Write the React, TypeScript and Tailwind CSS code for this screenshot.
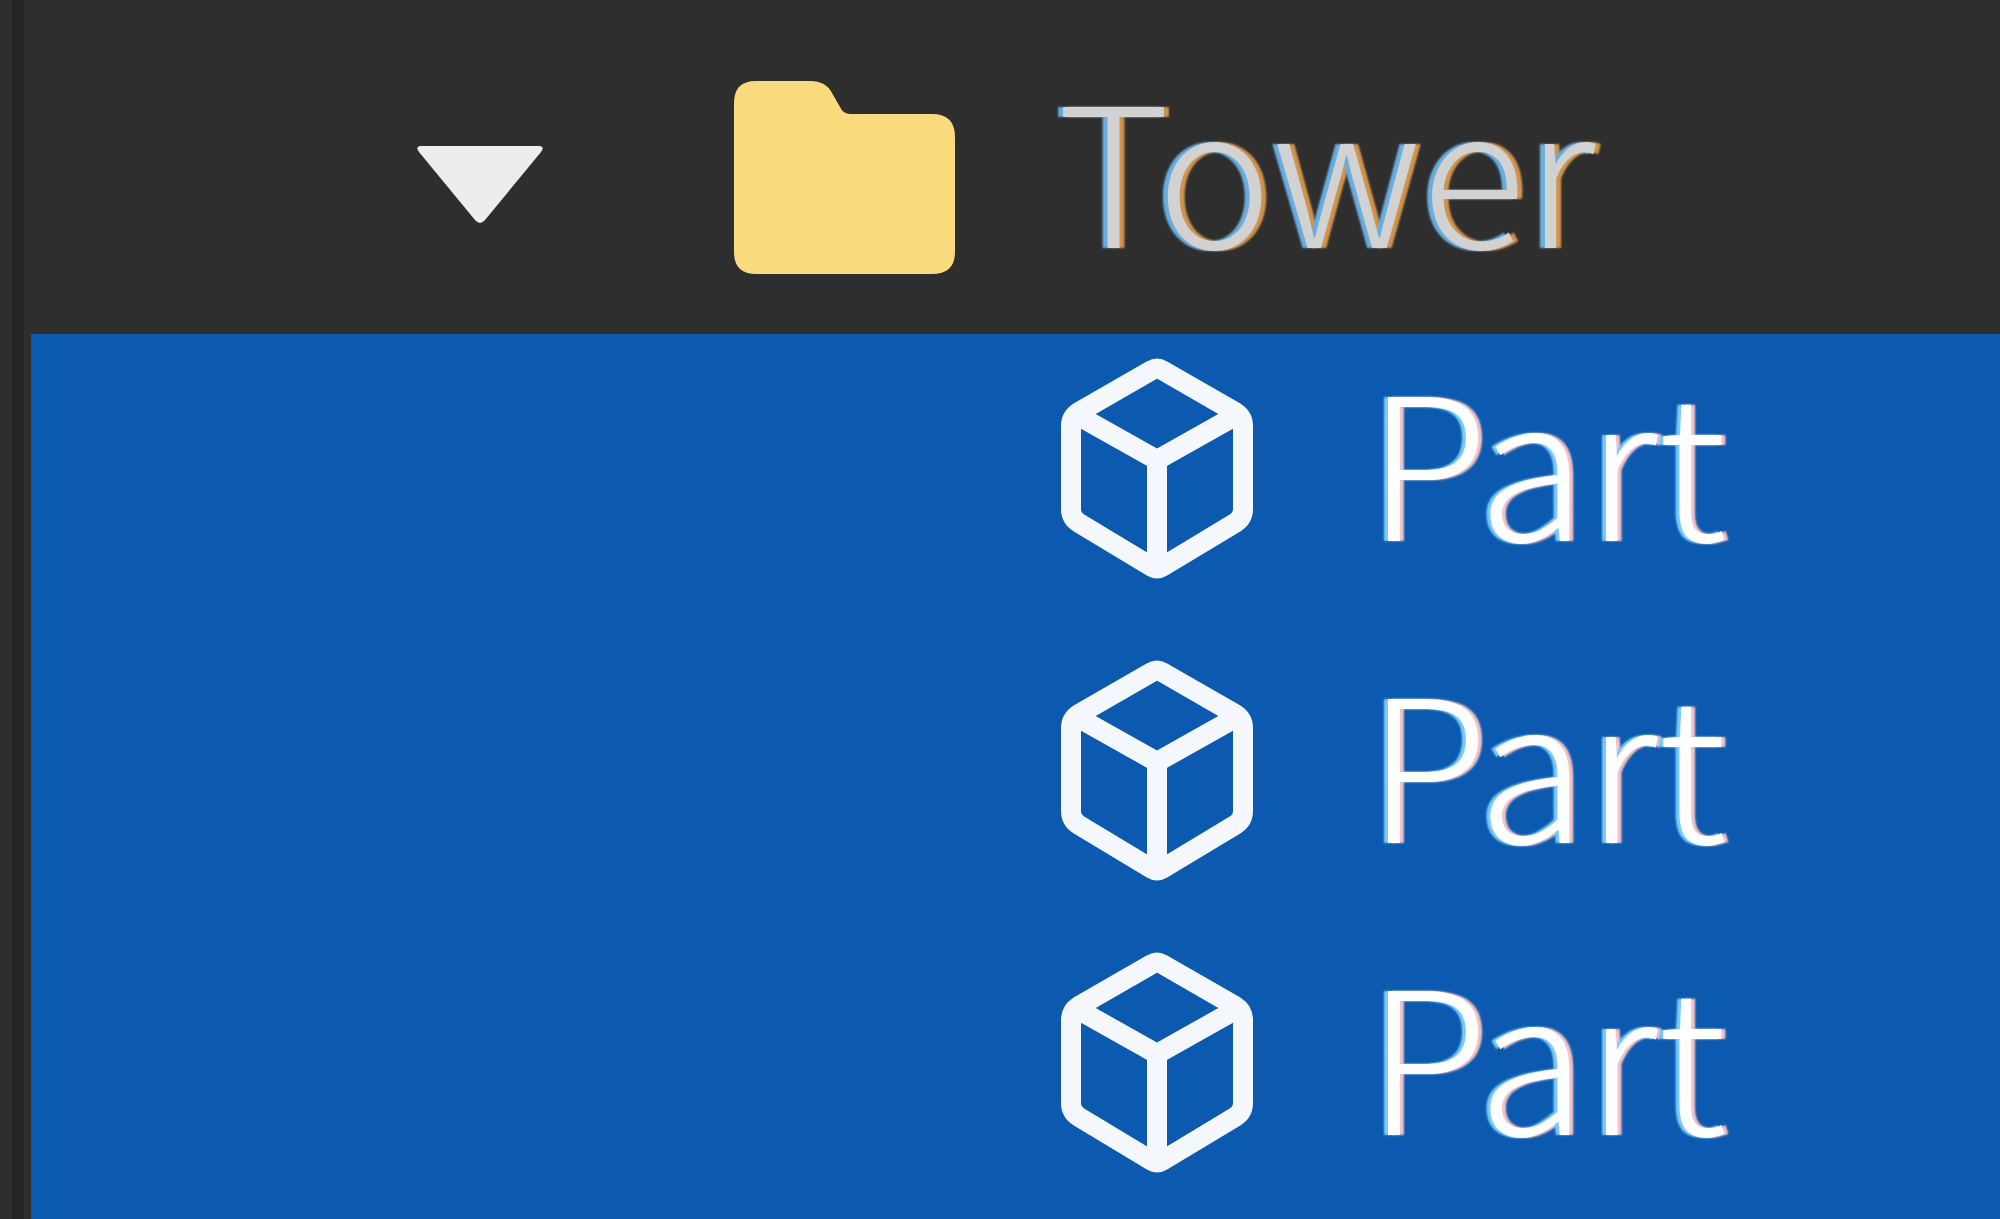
const parts = [
    { id: 1, name: "Part", height: "h-[302px]" },
    { id: 2, name: "Part", height: "h-[292px]" },
    { id: 3, name: "Part", height: "h-[291px]" },
]

function FolderIcon() {
    return (
        <svg viewBox="0 0 226 202" className="h-[202px] w-[226px] shrink-0" aria-hidden="true">
            <path
                d="M24 5H78Q94 5 100 17L108 31Q111 38 118 38H200Q223 38 223 61V176Q223 198 200 198H24Q2 198 2 176V27Q2 5 24 5Z"
                fill="#f9da7d"
            />
        </svg>
    )
}

function CubeIcon() {
    return (
        <svg
            viewBox="0 0 220 236"
            className="h-[236px] w-[220px] shrink-0"
            fill="none"
            stroke="#f4f7fc"
            strokeWidth="20"
            strokeLinejoin="round"
            aria-hidden="true"
        >
            <path d="M105 19Q110 16 115 19L188 61Q196 66 196 75V158Q196 167 188 172L115 216Q110 219 105 216L32 172Q24 167 24 158V75Q24 66 32 61Z" />
            <path d="M30 64L110 109L190 64M110 109V217" />
        </svg>
    )
}

export default function App() {
    return (
        <div className="flex min-h-screen bg-[#2e2e2e] font-['Noto_Sans_CJK_JP',sans-serif] text-[200px] leading-[200px] font-light">
            {/* Panel edge */}
            <div className="ml-3 mr-[7px] w-3 shrink-0 bg-[#242424]" />

            <ul className="min-w-0 flex-1" role="tree">
                <li role="treeitem" aria-expanded="true">
                    <div className="flex h-[334px] items-start pt-[76px] text-[#d2d2d2]">
                        <button className="ml-[383px] mt-[69px] shrink-0" aria-label="Collapse Tower">
                            <svg viewBox="0 0 132 82" className="h-[82px] w-[132px]">
                                <path d="M7 1H125Q131 1 127 7L71 75Q66 81 61 75L5 7Q1 1 7 1Z" fill="#ededed" />
                            </svg>
                        </button>
                        <div className="ml-[186px]">
                            <FolderIcon />
                        </div>
                        {/* Blue and orange fringes on either side, like ClearType */}
                        <span className="-mt-3 ml-[99px] text-[194px] [text-shadow:-5px_0_2px_#6aaee0,5px_0_2px_#d0944f]">
                            Tower
                        </span>
                    </div>

                    <ul className="bg-[#0c5aaf] text-white" role="group">
                        {parts.map((part) => (
                            <li
                                key={part.id}
                                role="treeitem"
                                aria-selected="true"
                                className={`flex items-start pl-[1016px] pt-[17px] ${part.height}`}
                            >
                                <CubeIcon />
                                <span className="ml-[100px] mt-1 text-[198px] [text-shadow:-4px_0_2px_#7accff,4px_0_2px_#f5c4c8]">
                                    {part.name}
                                </span>
                            </li>
                        ))}
                    </ul>
                </li>
            </ul>
        </div>
    )
}
